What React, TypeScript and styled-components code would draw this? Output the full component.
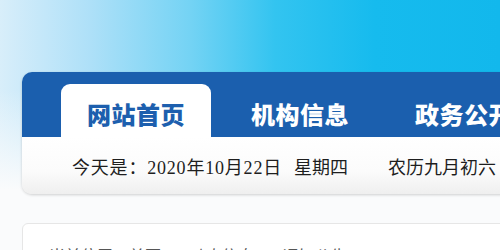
import React from "react";
import styled, { createGlobalStyle } from "styled-components";

const Global = createGlobalStyle`
  html, body {
    margin: 0;
    padding: 0;
    width: 500px;
    height: 250px;
    overflow: hidden;
  }
  body {
    background-color: #fafbfc;
    background-image:
      linear-gradient(180deg, rgba(250,251,252,0) 0px, rgba(250,251,252,0) 90px, #fafbfc 190px),
      linear-gradient(90deg, #d8eefa 0%, #aee0f8 18%, #74d3f4 38%, #33c4f0 55%, #16bbee 75%, #12b8ec 100%);
    background-size: 100% 200px, 100% 200px;
    background-repeat: no-repeat;
    font-family: "Noto Sans CJK SC", sans-serif;
  }
`;

const Page = styled.div`
  display: flex;
  flex-direction: column;
  padding: 72px 0 0 22px;
  width: 1100px;
  gap: 29px;
`;

const Header = styled.div`
  display: flex;
  flex-direction: column;
  border-radius: 10px;
  box-shadow: 0 1px 3px rgba(0, 0, 0, 0.18);
`;

const NavBar = styled.nav`
  display: flex;
  align-items: flex-end;
  gap: 14px;
  height: 65px;
  padding-left: 39px;
  background: #1b5fae;
  border-radius: 10px 10px 0 0;
`;

const Tab = styled.a<{ $active?: boolean }>`
  display: flex;
  align-items: center;
  justify-content: center;
  width: 150px;
  height: 53px;
  padding-top: 6px;
  box-sizing: border-box;
  border-radius: 9px 9px 0 0;
  background: ${(p) => (p.$active ? "#ffffff" : "transparent")};
  color: ${(p) => (p.$active ? "#1d5fae" : "#ffffff")};
  font-family: "Noto Sans CJK SC", sans-serif;
  font-weight: 900;
  font-size: 24px;
  letter-spacing: 0.5px;
  text-decoration: none;
`;

const DateBar = styled.div`
  display: flex;
  align-items: center;
  height: 57px;
  padding-left: 50px;
  padding-top: 1px;
  box-sizing: border-box;
  background: linear-gradient(180deg, #ffffff 0%, #fbfbfb 60%, #efefef 100%);
  border-radius: 0 0 9px 9px;
  font-family: "Liberation Serif", "Noto Sans CJK SC", serif;
  font-size: 18px;
  color: #1e1e1e;
  white-space: pre;
`;

const Item = styled.span<{ $gap?: number; $spacing?: number }>`
  margin-left: ${(p) => p.$gap ?? 0}px;
  letter-spacing: ${(p) => p.$spacing ?? 0}px;
`;

const Content = styled.div`
  background: #ffffff;
  border: 1px solid #e6e6e6;
  border-radius: 6px;
  padding: 19px 26px;
  height: 200px;
`;

const Crumb = styled.div`
  font-family: "Noto Sans CJK SC", sans-serif;
  font-size: 16px;
  color: #555;
  display: flex;
  gap: 10px;
`;

export default function App() {
  return (
    <>
      <Global />
      <Page>
        <Header>
          <NavBar>
            <Tab $active>网站首页</Tab>
            <Tab>机构信息</Tab>
            <Tab>政务公开</Tab>
            <Tab>互动交流</Tab>
          </NavBar>
          <DateBar>
            <Item $spacing={0.8}>今天是：2020年10月22日</Item>
            <Item $gap={12}>星期四</Item>
            <Item $gap={40}>农历九月初六</Item>
          </DateBar>
        </Header>
        <Content>
          <Crumb>
            <span>当前位置：首页</span>
            <span>&gt;</span>
            <span>动态信息</span>
            <span>&gt;</span>
            <span>通知公告</span>
          </Crumb>
        </Content>
      </Page>
    </>
  );
}
